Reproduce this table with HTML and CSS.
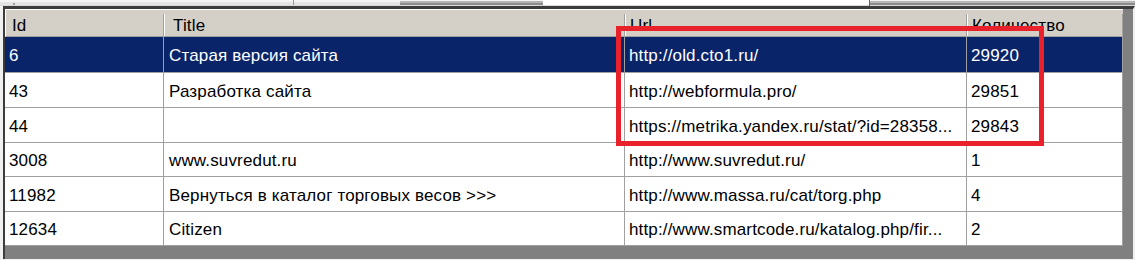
FILE: index.html
```html
<!DOCTYPE html>
<html lang="ru">
<head>
<meta charset="utf-8">
<title>Grid</title>
<link rel="stylesheet" href="styles.css">
</head>
<body>
<div class="page">
  <div class="strip">
    <div class="seg seg-a"><span class="tick-left"></span><span class="tick"></span></div>
    <div class="seg seg-b"></div>
    <div class="seg seg-c"></div>
    <div class="seg seg-d"></div>
  </div>
  <div class="frame">
    <div class="grid">
      <div class="hcell first">Id</div>
      <div class="hcell">Title</div>
      <div class="hcell">Url</div>
      <div class="hcell">Количество</div>

      <div class="cell sel">6</div>
      <div class="cell sel">Старая версия сайта</div>
      <div class="cell sel">http://old.cto1.ru/</div>
      <div class="cell sel">29920</div>

      <div class="cell">43</div>
      <div class="cell">Разработка сайта</div>
      <div class="cell">http://webformula.pro/</div>
      <div class="cell">29851</div>

      <div class="cell">44</div>
      <div class="cell"></div>
      <div class="cell">https://metrika.yandex.ru/stat/?id=28358...</div>
      <div class="cell">29843</div>

      <div class="cell">3008</div>
      <div class="cell">www.suvredut.ru</div>
      <div class="cell">http://www.suvredut.ru/</div>
      <div class="cell">1</div>

      <div class="cell">11982</div>
      <div class="cell">Вернуться в каталог торговых весов &gt;&gt;&gt;</div>
      <div class="cell">http://www.massa.ru/cat/torg.php</div>
      <div class="cell">4</div>

      <div class="cell">12634</div>
      <div class="cell">Citizen</div>
      <div class="cell">http://www.smartcode.ru/katalog.php/fir...</div>
      <div class="cell">2</div>
    </div>
  </div>
  <div class="mark"></div>
</div>
</body>
</html>
```
FILE: styles.css
```css
html, body {
  margin: 0;
  padding: 0;
  background: #f0f0f0;
}
.page {
  position: relative;
  width: 1135px;
  height: 260px;
  overflow: hidden;
  font-family: "Liberation Sans", Arial, sans-serif;
  font-size: 17px;
  letter-spacing: 0.15px;
  color: #000;
}
.strip {
  display: flex;
  height: 6px;
}
.seg { height: 6px; }
.seg-a {
  width: 400px;
  background: linear-gradient(#f4f4f4 0 2px, #e4e4e4 2px 5px, #d8d8d8 5px);
  display: flex;
}
.tick-left {
  width: 2px;
  height: 2px;
  margin: 3px 0 0 13px;
  background: #a0a0a0;
}
.tick {
  width: 1px;
  height: 5px;
  margin-left: 278px;
  background: #9a9a9a;
}
.seg-b {
  width: 143px;
  background: linear-gradient(#f4f4f4 0 1px, #b4b4b4 1px 3px, #8c8c8c 3px 5px, #d8d8d8 5px);
}
.seg-c {
  width: 327px;
  background: linear-gradient(#ffffff 0 5px, #d8d8d8 5px);
  box-shadow: inset -1px 0 0 #606060;
}
.seg-d {
  flex: 1;
  background: linear-gradient(#f0f0f0 0 1px, #b8b8b8 1px 3px, #8c8c8c 3px 5px, #d8d8d8 5px);
}
.frame {
  margin-left: 3px;
  height: 250px;
  border-top: 3px solid #3c3c3c;
  border-left: 2px solid #3c3c3c;
  border-right: 2px solid #f0f0f0;
  background: #808080;
}
.grid {
  display: grid;
  grid-template-columns: 159px 461px 342px 156px;
  grid-template-rows: 28px 36px 35px 35px 34px 35px 34px;
  width: 1118px;
}
.hcell {
  position: relative;
  background: #d4d0c8;
  border-top: 1px solid #ffffff;
  border-bottom: 1px solid #a0a0a0;
  display: flex;
  align-items: center;
  padding: 6px 0 0 5px;
  box-sizing: border-box;
  white-space: nowrap;
  overflow: hidden;
}
.hcell.first {
  border-left: 1px solid #ffffff;
  padding-left: 6px;
}
.hcell:nth-child(2) { padding-left: 9px; }
.hcell::after {
  content: "";
  position: absolute;
  right: 0;
  top: 4px;
  bottom: 0;
  width: 1px;
  background: #a0a0a0;
}
.hcell + .hcell::before {
  content: "";
  position: absolute;
  left: 0;
  top: 4px;
  bottom: 0;
  width: 1px;
  background: #ffffff;
}
.cell {
  background: #ffffff;
  border-right: 1px solid #a0a0a0;
  border-bottom: 1px solid #a0a0a0;
  display: flex;
  align-items: center;
  padding: 3px 0 0 4px;
  box-sizing: border-box;
  white-space: nowrap;
  overflow: hidden;
}
.cell:nth-child(4n+2) { padding-left: 5px; }
.cell.sel {
  background: #0a246a;
  color: #ffffff;
}
.mark {
  position: absolute;
  left: 616px;
  top: 26px;
  width: 428px;
  height: 120px;
  box-sizing: border-box;
  border: 5px solid #e8212b;
}
```
